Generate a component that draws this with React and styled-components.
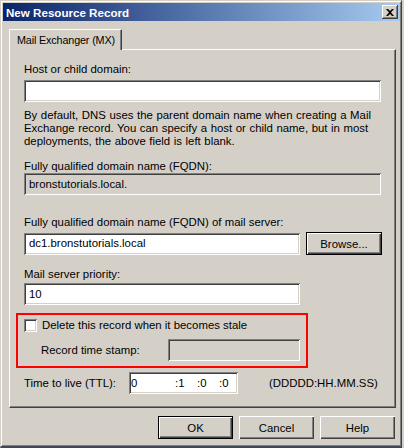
import React from 'react'
import styled, { createGlobalStyle } from 'styled-components'

const GlobalStyle = createGlobalStyle`
  html, body {
    margin: 0;
    padding: 0;
    background: #d4d0c8;
  }
  body {
    font-family: "Liberation Sans", Arial, sans-serif;
    font-size: 11.4px;
    color: #000;
  }
`

const sunken = `
  box-shadow: inset 1px 1px 0 #808080, inset -1px -1px 0 #ffffff,
    inset 2px 2px 0 #404040, inset -2px -2px 0 #d4d0c8;
`

const Window = styled.div`
  box-sizing: border-box;
  width: 402px;
  height: 448px;
  background: #d4d0c8;
  border-top: 1px solid #d4d0c8;
  border-left: 1px solid #d4d0c8;
  border-right: 1px solid #404040;
  border-bottom: 2px solid #404858;
  box-shadow: inset 1px 1px 0 #ffffff, inset -1px -1px 0 #808080;
  display: flex;
  flex-direction: column;
`

const TitleBar = styled.div`
  margin: 2px 1px 0 2px;
  height: 18px;
  background: linear-gradient(to right, #0a246a, #a6caf0);
  display: flex;
  align-items: center;
  justify-content: space-between;
  padding: 0 2px 0 3px;
`

const Title = styled.span`
  color: #fff;
  font-weight: bold;
  font-size: 11.6px;
`

const CloseButton = styled.div`
  box-sizing: border-box;
  width: 16px;
  height: 14px;
  background: #d4d0c8;
  box-shadow: inset -1px -1px 0 #404040, inset 1px 1px 0 #ffffff,
    inset -2px -2px 0 #808080;
  display: flex;
  align-items: center;
  justify-content: center;
`

const Body = styled.div`
  padding: 8px 5px 0 8px;
  display: flex;
  flex-direction: column;
`

const TabStrip = styled.div`
  display: flex;
  height: 20px;
  position: relative;
  z-index: 1;
`

const Tab = styled.div`
  box-sizing: border-box;
  width: 113px;
  height: 21px;
  padding: 3px 0 0 7px;
  background: #d4d0c8;
  border-top: 1px solid #fff;
  border-left: 1px solid #fff;
  border-right: 1px solid #404040;
  box-shadow: inset -1px 0 0 #808080;
  line-height: 14px;
  font-size: 10.8px;
  letter-spacing: -0.15px;
  white-space: nowrap;
`

const Panel = styled.div`
  box-sizing: border-box;
  height: 359px;
  border-top: 1px solid #fff;
  border-left: 1px solid #fff;
  border-right: 1px solid #404040;
  border-bottom: 1px solid #404040;
  box-shadow: inset -1px -1px 0 #808080;
  padding: 13px 0 0 14px;
  display: flex;
  flex-direction: column;
`

const Label = styled.div`
  line-height: 13px;
  margin-top: ${p => p.$top || 0}px;
`

const Paragraph = styled.p`
  margin: 7px 0 0;
  line-height: 13px;
  width: 366px;
  word-spacing: 0.4px;
`

const Field = styled.div`
  box-sizing: border-box;
  width: ${p => p.$width}px;
  height: 22px;
  margin-top: ${p => p.$top || 0}px;
  background: ${p => (p.$readonly ? '#d4d0c8' : '#fff')};
  ${sunken}
  padding: 0 5px;
  display: flex;
  align-items: center;
  line-height: 13px;
`

const Row = styled.div`
  display: flex;
  align-items: center;
  margin-top: ${p => p.$top || 0}px;
`

const Button = styled.div`
  box-sizing: border-box;
  width: ${p => p.$width || 75}px;
  height: 23px;
  background: #d4d0c8;
  display: flex;
  align-items: center;
  justify-content: center;
  border: ${p => (p.$default ? '1px solid #000' : '0')};
  box-shadow: inset 1px 1px 0 #ffffff, inset -1px -1px 0 #404040,
    inset -2px -2px 0 #808080;
`

const StaleBox = styled.div`
  box-sizing: border-box;
  width: 292px;
  height: 55px;
  margin: 8px 0 0 -8px;
  border: 2px solid #f00;
  padding: 4px 0 0 6px;
  display: flex;
  flex-direction: column;
`

const CheckRow = styled.label`
  display: flex;
  align-items: center;
  gap: 5px;
  line-height: 13px;
`

const CheckBox = styled.span`
  box-sizing: border-box;
  width: 13px;
  height: 13px;
  background: #fff;
  ${sunken}
`

const StampRow = styled.div`
  display: flex;
  align-items: center;
  margin-top: 7px;
  padding-left: 17px;
`

const StampLabel = styled.span`
  width: 127px;
`

const TtlRow = styled.div`
  display: flex;
  align-items: center;
  margin-top: 4px;
`

const TtlLabel = styled.span`
  width: 105px;
`

const TtlField = styled.div`
  box-sizing: border-box;
  width: 109px;
  height: 22px;
  background: #fff;
  ${sunken}
  display: flex;
  align-items: center;
  padding-left: 2px;
`

const TtlPart = styled.span`
  width: ${p => p.$width}px;
`

const Format = styled.span`
  margin-left: 31px;
`

const Footer = styled.div`
  display: flex;
  justify-content: flex-end;
  gap: 6px;
  padding: 8px 1px 0 0;
`

const App = () => {
  return (
    <>
      <GlobalStyle />
      <Window>
        <TitleBar>
          <Title>New Resource Record</Title>
          <CloseButton>
            <svg width="8" height="7" viewBox="0 0 8 7">
              <path d="M0 0h2l2 2 2-2h2L5 3.5 8 7H6L4 5 2 7H0l3-3.5z" fill="#000" />
            </svg>
          </CloseButton>
        </TitleBar>
        <Body>
          <TabStrip>
            <Tab>Mail Exchanger (MX)</Tab>
          </TabStrip>
          <Panel>
            <Label>Host or child domain:</Label>
            <Field $width={357} $top={4} />
            <Paragraph>
              By default, DNS uses the parent domain name when creating a Mail
              Exchange record. You can specify a host or child name, but in most
              deployments, the above field is left blank.
            </Paragraph>
            <Label $top={12}>Fully qualified domain name (FQDN):</Label>
            <Field $width={357} $readonly>bronstutorials.local.</Field>
            <Label $top={21}>Fully qualified domain name (FQDN) of mail server:</Label>
            <Row $top={3}>
              <Field $width={276}>dc1.bronstutorials.local</Field>
              <Button $default $width={76} style={{ marginLeft: 6 }}>Browse...</Button>
            </Row>
            <Label $top={13}>Mail server priority:</Label>
            <Field $width={276} $top={2}>10</Field>
            <StaleBox>
              <CheckRow>
                <CheckBox />
                Delete this record when it becomes stale
              </CheckRow>
              <StampRow>
                <StampLabel>Record time stamp:</StampLabel>
                <Field $width={132} $readonly />
              </StampRow>
            </StaleBox>
            <TtlRow>
              <TtlLabel>Time to live (TTL):</TtlLabel>
              <TtlField>
                <TtlPart $width={44}>0</TtlPart>
                <TtlPart $width={22}>:1</TtlPart>
                <TtlPart $width={22}>:0</TtlPart>
                <TtlPart $width={14}>:0</TtlPart>
              </TtlField>
              <Format>(DDDDD:HH.MM.SS)</Format>
            </TtlRow>
          </Panel>
          <Footer>
            <Button $default>OK</Button>
            <Button $width={75}>Cancel</Button>
            <Button $width={75}>Help</Button>
          </Footer>
        </Body>
      </Window>
    </>
  )
}

export default App
